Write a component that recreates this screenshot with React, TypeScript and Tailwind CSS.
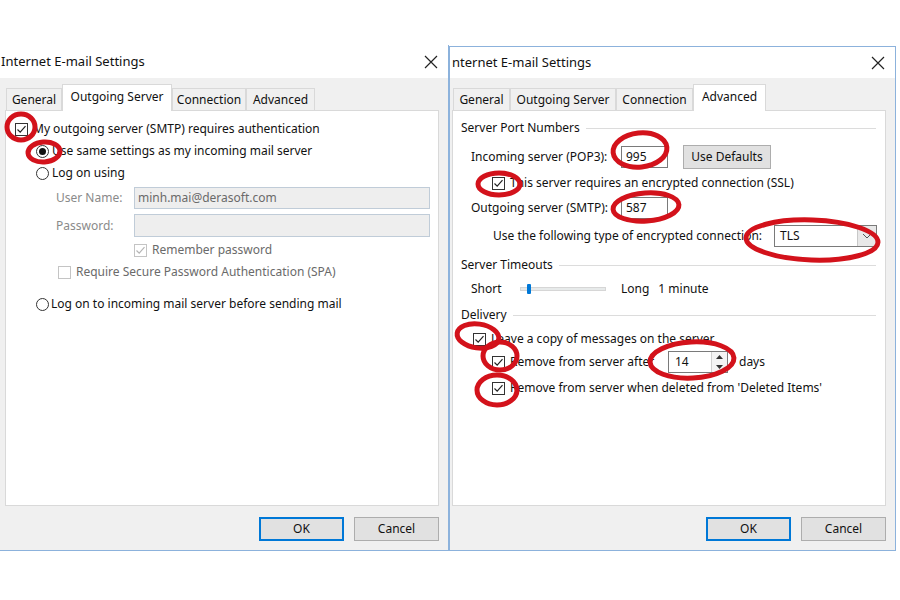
import React from 'react'

const RED = '#d3121b'

// red marker rings drawn over the screenshot: [cx, cy, rx, ry, rotate]
const rings: [number, number, number, number, number][] = [
  [21, 127, 14, 13, 0],
  [44, 152, 16, 10, -4],
  [640, 150, 27, 17, -6],
  [499, 184, 21, 11, 0],
  [646, 207, 33, 14, -4],
  [812, 240, 66, 20, 2],
  [478, 336, 21, 12, 8],
  [500, 356, 17, 14, 0],
  [692, 360, 42, 18, -3],
  [497, 390, 20, 15, 0],
]

function Check({ checked, disabled }: { checked?: boolean; disabled?: boolean }) {
  return (
    <span
      className={
        'w-[13px] h-[13px] shrink-0 flex items-center justify-center border bg-white ' +
        (disabled ? 'border-[#c4c4c4]' : 'border-[#333]')
      }
    >
      {checked && (
        <svg width="11" height="11" viewBox="0 0 11 11">
          <path
            d="M1.5 5.5 L4.2 8.2 L9.5 2.2"
            fill="none"
            stroke={disabled ? '#b5b5b5' : '#222'}
            strokeWidth="1.2"
          />
        </svg>
      )}
    </span>
  )
}

function Radio({ on }: { on?: boolean }) {
  return (
    <span className="w-[13px] h-[13px] shrink-0 rounded-full border border-[#333] bg-white flex items-center justify-center">
      {on && <span className="w-[7px] h-[7px] rounded-full bg-[#111]" />}
    </span>
  )
}

function CloseX() {
  return (
    <svg width="14" height="14" viewBox="0 0 14 14">
      <path d="M1 1 L13 13 M13 1 L1 13" stroke="#222" strokeWidth="1.2" />
    </svg>
  )
}

function Tab({ label, active, w }: { label: string; active?: boolean; w: string }) {
  return (
    <div
      className={
        'flex items-center justify-center border border-[#d9d9d9] ' +
        w +
        (active ? ' h-[27px] bg-white border-b-0 -mb-px pb-[3px] z-10' : ' h-[22px] bg-[#f0f0f0] border-b-0')
      }
    >
      {label}
    </div>
  )
}

function GroupHead({ label }: { label: string }) {
  return (
    <div className="h-[18px] flex items-center ml-[8px] mr-[9px] gap-[6px]">
      <span>{label}</span>
      <span className="flex-1 h-px bg-[#dcdcdc]" />
    </div>
  )
}

function Btn({ label, primary, w = 'w-[85px]' }: { label: string; primary?: boolean; w?: string }) {
  return (
    <div
      className={
        'h-[24px] flex items-center justify-center bg-[#e1e1e1] ' +
        w +
        (primary ? ' border-2 border-[#0078d7]' : ' border border-[#adadad]')
      }
    >
      {label}
    </div>
  )
}

function OutgoingDialog() {
  return (
    <div className="w-[449px] h-[506px] flex flex-col border-r border-b border-[#8cb2dc] shrink-0">
      <div className="h-[33px] bg-white flex items-center justify-between pl-[1px] pr-[10px]">
        <span className="text-[13px]">Internet E-mail Settings</span>
        <CloseX />
      </div>
      <div className="flex-1 bg-[#f0f0f0] flex flex-col pl-[5px] pr-[9px]">
        <div className="flex items-end pt-[6px] pl-[1px]">
          <Tab label="General" w="w-[56px]" />
          <Tab label="Outgoing Server" w="w-[110px]" active />
          <Tab label="Connection" w="w-[74px]" />
          <Tab label="Advanced" w="w-[69px]" />
        </div>
        <div className="h-[396px] bg-white border border-[#d9d9d9] flex flex-col pt-[7px]">
          <div className="h-[22px] flex items-center gap-[5px] ml-[9px]">
            <Check checked />
            <span>My outgoing server (SMTP) requires authentication</span>
          </div>
          <div className="h-[22px] flex items-center gap-[3px] ml-[30px]">
            <Radio on />
            <span>Use same settings as my incoming mail server</span>
          </div>
          <div className="h-[22px] flex items-center gap-[3px] ml-[30px]">
            <Radio />
            <span>Log on using</span>
          </div>
          <div className="h-[22px] flex items-center mt-[3px] ml-[50px] text-[#8a8a8a]">
            <span className="w-[78px]">User Name:</span>
            <div className="w-[296px] h-[22px] bg-[#eeeeee] border border-[#c0ccd8] flex items-center px-[3px] text-[#6a6a6a]">
              minh.mai@derasoft.com
            </div>
          </div>
          <div className="h-[23px] flex items-center mt-[5px] ml-[50px] text-[#8a8a8a]">
            <span className="w-[78px]">Password:</span>
            <div className="w-[296px] h-[23px] bg-[#eeeeee] border border-[#c0ccd8]" />
          </div>
          <div className="h-[22px] flex items-center gap-[5px] mt-[2px] ml-[128px] text-[#6a6a6a]">
            <Check checked disabled />
            <span>Remember password</span>
          </div>
          <div className="h-[22px] flex items-center gap-[5px] ml-[52px] text-[#6a6a6a]">
            <Check disabled />
            <span>Require Secure Password Authentication (SPA)</span>
          </div>
          <div className="h-[22px] flex items-center gap-[2px] mt-[10px] ml-[30px]">
            <Radio />
            <span>Log on to incoming mail server before sending mail</span>
          </div>
        </div>
        <div className="flex justify-end gap-[10px] mt-[11px]">
          <Btn label="OK" primary />
          <Btn label="Cancel" />
        </div>
      </div>
    </div>
  )
}

function AdvancedDialog() {
  return (
    <div className="w-[447px] h-[505px] mt-px flex flex-col border border-[#8cb2dc] shrink-0">
      <div className="h-[31px] bg-white flex items-center justify-between pl-[2px] pr-[10px]">
        <span className="text-[13px]">nternet E-mail Settings</span>
        <CloseX />
      </div>
      <div className="flex-1 bg-[#f0f0f0] flex flex-col pl-[2px] pr-[9px]">
        <div className="flex items-end pt-[6px] pl-[1px]">
          <Tab label="General" w="w-[57px]" />
          <Tab label="Outgoing Server" w="w-[106px]" />
          <Tab label="Connection" w="w-[77px]" />
          <Tab label="Advanced" w="w-[73px]" active />
        </div>
        <div className="h-[396px] bg-white border border-[#d9d9d9] flex flex-col pt-[8px]">
          <GroupHead label="Server Port Numbers" />
          <div className="h-[22px] flex items-center mt-[9px] ml-[18px]">
            <span className="w-[150px]">Incoming server (POP3):</span>
            <div className="w-[47px] h-[22px] border border-[#7a7a7a] flex items-center px-[4px]">995</div>
            <div className="ml-[15px]">
              <Btn label="Use Defaults" w="w-[88px]" />
            </div>
          </div>
          <div className="h-[22px] flex items-center gap-[5px] mt-[4px] ml-[39px]">
            <Check checked />
            <span>This server requires an encrypted connection (SSL)</span>
          </div>
          <div className="h-[22px] flex items-center mt-[3px] ml-[18px]">
            <span className="w-[150px]">Outgoing server (SMTP):</span>
            <div className="w-[47px] h-[22px] border border-[#7a7a7a] flex items-center px-[4px]">587</div>
          </div>
          <div className="h-[22px] flex items-center mt-[6px] ml-[40px]">
            <span className="w-[281px]">Use the following type of encrypted connection:</span>
            <div className="w-[103px] h-[22px] border border-[#7a7a7a] flex items-center justify-between pl-[5px]">
              <span>TLS</span>
              <span className="w-[19px] h-[20px] bg-[#e8e8e8] border-l border-[#c8c8c8] flex items-center justify-center">
                <svg width="10" height="6" viewBox="0 0 10 6">
                  <path d="M1 1 L5 5 L9 1" fill="none" stroke="#555" strokeWidth="1" />
                </svg>
              </span>
            </div>
          </div>
          <div className="mt-[9px]">
            <GroupHead label="Server Timeouts" />
          </div>
          <div className="h-[22px] flex items-center mt-[4px] ml-[18px]">
            <span className="w-[49px]">Short</span>
            <div className="w-[86px] h-[4px] bg-[#e7eaea] border border-[#d6d6d6] flex items-center">
              <span className="ml-[6px] w-[4px] h-[10px] bg-[#0078d7] rounded-[1px]" />
            </div>
            <span className="ml-[15px]">Long</span>
            <span className="ml-[9px]">1 minute</span>
          </div>
          <div className="mt-[6px]">
            <GroupHead label="Delivery" />
          </div>
          <div className="h-[22px] flex items-center gap-[5px] mt-[4px] ml-[20px]">
            <Check checked />
            <span>Leave a copy of messages on the server</span>
          </div>
          <div className="h-[22px] flex items-center mt-px ml-[39px]">
            <Check checked />
            <span className="w-[163px] pl-[5px]">Remove from server after</span>
            <div className="w-[60px] h-[22px] border border-[#7a7a7a] flex items-center justify-between pl-[6px]">
              <span>14</span>
              <span className="w-[16px] h-[20px] border-l border-[#d0d0d0] flex flex-col items-center justify-around bg-[#f4f4f4]">
                <svg width="7" height="4" viewBox="0 0 7 4">
                  <path d="M0 4 L3.5 0 L7 4 Z" fill="#333" />
                </svg>
                <svg width="7" height="4" viewBox="0 0 7 4">
                  <path d="M0 0 L3.5 4 L7 0 Z" fill="#333" />
                </svg>
              </span>
            </div>
            <span className="ml-[11px]">days</span>
          </div>
          <div className="h-[22px] flex items-center gap-[5px] mt-[4px] ml-[39px]">
            <Check checked />
            <span>Remove from server when deleted from 'Deleted Items'</span>
          </div>
        </div>
        <div className="flex justify-end gap-[10px] mt-[11px]">
          <Btn label="OK" primary />
          <Btn label="Cancel" />
        </div>
      </div>
    </div>
  )
}

export default function App() {
  return (
    <div className="relative w-[900px] h-[600px] bg-white overflow-hidden text-[12px] text-[#111] font-['Noto_Sans',sans-serif]">
      <div className="flex pt-[45px]">
        <OutgoingDialog />
        <AdvancedDialog />
      </div>
      {/* hand-drawn red rings over the settings */}
      <svg className="absolute inset-0 pointer-events-none" width="900" height="600">
        {rings.map(([cx, cy, rx, ry, rot], i) => (
          <ellipse
            key={i}
            cx={cx}
            cy={cy}
            rx={rx}
            ry={ry}
            transform={`rotate(${rot} ${cx} ${cy})`}
            fill="none"
            stroke={RED}
            strokeWidth="5"
          />
        ))}
      </svg>
    </div>
  )
}
